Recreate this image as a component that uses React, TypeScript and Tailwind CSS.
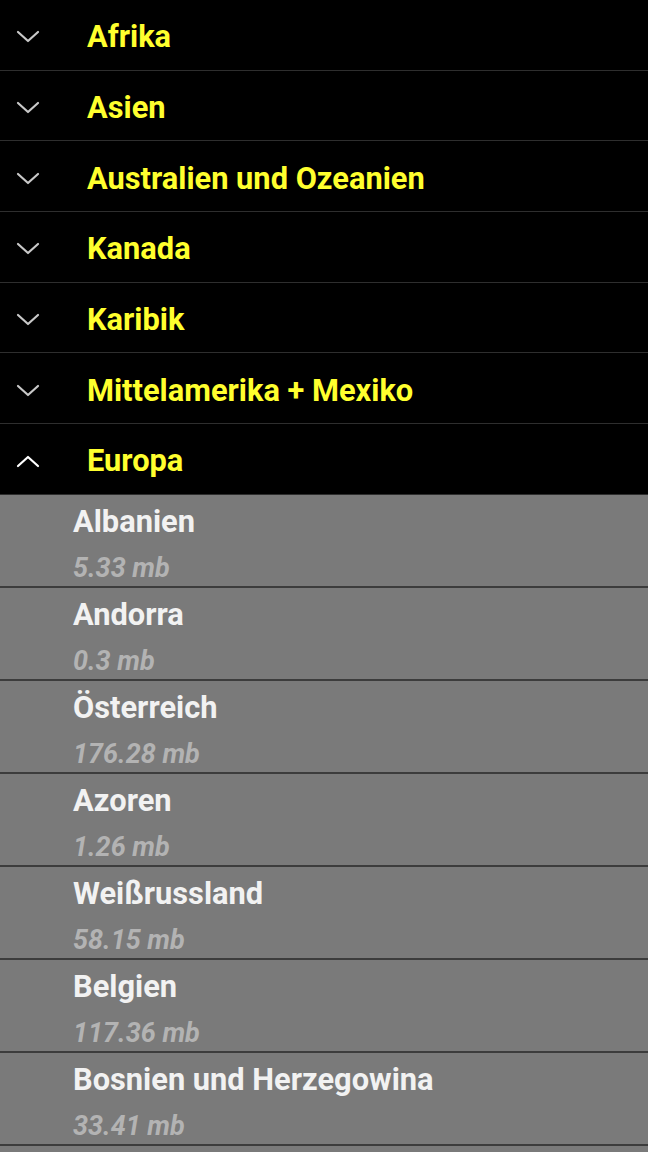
import React from "react";

const regions = [
  "Afrika",
  "Asien",
  "Australien und Ozeanien",
  "Kanada",
  "Karibik",
  "Mittelamerika + Mexiko",
];

const countries: [string, string][] = [
  ["Albanien", "5.33 mb"],
  ["Andorra", "0.3 mb"],
  ["Österreich", "176.28 mb"],
  ["Azoren", "1.26 mb"],
  ["Weißrussland", "58.15 mb"],
  ["Belgien", "117.36 mb"],
  ["Bosnien und Herzegowina", "33.41 mb"],
];

function Chevron({ up }: { up?: boolean }) {
  return (
    <svg width="24" height="14" viewBox="0 0 24 14" className="shrink-0">
      <polyline
        points={up ? "2,12 12,3 22,12" : "2,2 12,11 22,2"}
        fill="none"
        stroke={up ? "#ffffff" : "#c8c8c8"}
        strokeWidth="2.2"
        strokeLinecap="round"
        strokeLinejoin="round"
      />
    </svg>
  );
}

function Header({ name, up }: { name: string; up?: boolean }) {
  return (
    <div className="flex h-[70.7px] items-center border-b border-[#2e2e2e] bg-black pl-[16px] pt-[5px]">
      <Chevron up={up} />
      <span className="ml-[47px] text-[30.8px] font-bold leading-[36px] text-[#ffff2e]">
        {name}
      </span>
    </div>
  );
}

export default function App() {
  return (
    <div
      className="h-[1152px] w-[648px] overflow-hidden bg-[#7a7a7a]"
      style={{ fontFamily: "Roboto, 'Noto Sans', sans-serif" }}
    >
      {regions.map((r) => (
        <Header key={r} name={r} />
      ))}
      <Header name="Europa" up />
      {countries.map(([n, s]) => (
        <div
          key={n}
          className="h-[93px] border-b-2 border-[#3c3c3c] bg-[#7a7a7a] pl-[73px] pt-[9px]"
        >
          <div className="text-[30.8px] font-bold leading-[36px] text-[#f2f2f2]">{n}</div>
          <div className="mt-[12px] text-[27px] font-bold italic leading-[32px] text-[#b3b3b3]">
            {s}
          </div>
        </div>
      ))}
    </div>
  );
}
